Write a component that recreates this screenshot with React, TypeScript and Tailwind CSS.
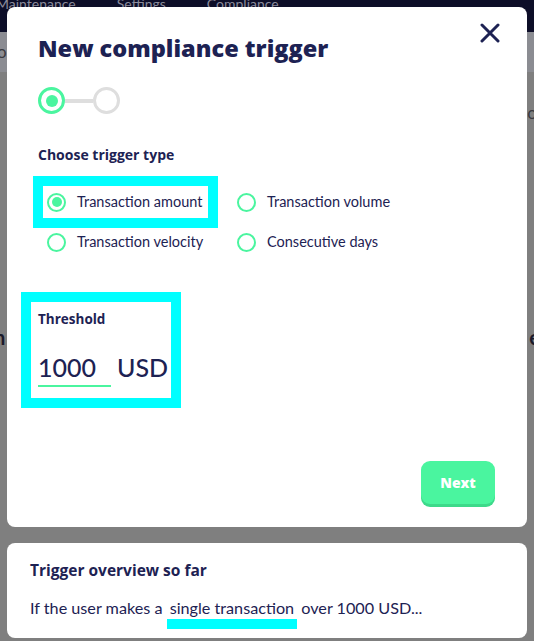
import React, { useState } from 'react';

const navy = 'text-[#1d2253]';
const heading = "font-['Open_Sans',sans-serif]";

type Option = { id: string; label: string };

const options: Option[] = [
  { id: 'amount', label: 'Transaction amount' },
  { id: 'volume', label: 'Transaction volume' },
  { id: 'velocity', label: 'Transaction velocity' },
  { id: 'days', label: 'Consecutive days' },
];

function Radio({ checked }: { checked: boolean }) {
  return (
    <span className="flex h-[19px] w-[19px] shrink-0 items-center justify-center rounded-full border-2 border-[#4af59f]">
      {checked && <span className="h-[10px] w-[10px] rounded-full bg-[#4af59f]" />}
    </span>
  );
}

function Stepper() {
  return (
    <div className="flex items-center">
      <span className="flex h-[27px] w-[27px] items-center justify-center rounded-full border-[3px] border-[#4af59f]">
        <span className="h-[12px] w-[12px] rounded-full bg-[#4af59f]" />
      </span>
      <span className="h-[4px] w-[28px] bg-[#dedede]" />
      <span className="h-[27px] w-[27px] rounded-full border-[3px] border-[#dedede]" />
    </div>
  );
}

export default function App() {
  const [selected, setSelected] = useState('amount');
  const [amount, setAmount] = useState('1000');

  return (
    <div className="relative h-[641px] w-[534px] overflow-hidden bg-[#7f7f7f] font-['Lato',sans-serif]">
      {/* page behind the overlay */}
      <div className="flex h-[32px] items-start gap-[41px] bg-[#0d0e28] text-[14px] leading-[10px] text-[#8b8b9b]">
        <span className="-ml-[4px] -mt-[1px]">Maintenance</span>
        <span className="-mt-[1px]">Settings</span>
        <span className="-mt-[1px]">Compliance</span>
      </div>
      <div className="flex h-[40px] items-center bg-[#8b8c92] text-[17px] text-[#3a3a40]">
        <span className="-ml-[3px]">o</span>
      </div>
      <div className="mt-[28px] flex justify-end text-[17px] text-[#3a3a40]">
        <span className="-mr-[3px]">o</span>
      </div>
      <div className="mt-[196px] flex justify-between text-[20px] font-bold text-[#1a1a2a]">
        <span className="-ml-[6px]">n</span>
        <span className="-mr-[6px]">e</span>
      </div>

      {/* modal layer */}
      <div className="absolute inset-0 flex flex-col gap-[16px] px-[7px] pt-[7px]">
        <div className="relative flex h-[520px] flex-col rounded-lg bg-white pl-[31px] pr-[32px] pt-[26px]">
          <button className={`absolute right-[27px] top-[16px] ${navy}`} aria-label="Close">
            <svg width="20" height="20" viewBox="0 0 20 20" fill="none" stroke="currentColor" strokeWidth="3" strokeLinecap="round">
              <path d="M2 2L18 18M18 2L2 18" />
            </svg>
          </button>

          <h1 className={`${heading} text-[23.5px] font-extrabold leading-[30px] ${navy}`}>New compliance trigger</h1>

          <div className="mt-[24px]">
            <Stepper />
          </div>

          <h2 className={`${heading} mt-[31px] text-[14px] font-bold leading-[20px] ${navy}`}>Choose trigger type</h2>

          <div className="ml-[5px] mt-[21px] grid grid-cols-[190px_auto] gap-y-[8px]">
            {options.map((o) => (
              <button
                key={o.id}
                onClick={() => setSelected(o.id)}
                className={`flex h-[32px] w-fit items-center gap-[11px] pl-[4px] pr-[6px] text-[14.5px] ${navy} ${
                  o.id === 'amount' ? 'outline-[10px] outline-solid outline-[#00ffff]' : ''
                }`}
              >
                <Radio checked={selected === o.id} />
                {o.label}
              </button>
            ))}
          </div>

          <div className="-ml-[7px] mt-[44px] h-[96px] w-[140px] pl-[7px] pt-[8px] outline-[10px] outline-solid outline-[#00ffff]">
            <div className={`${heading} text-[13.5px] font-bold leading-[18px] ${navy}`}>Threshold</div>
            <div className="mt-[25px] flex items-start">
              <input
                value={amount}
                onChange={(e) => setAmount(e.target.value)}
                className={`w-[73px] border-b-2 border-[#4af59f] pb-[4px] text-[25px] font-medium leading-[28px] outline-none ${navy}`}
              />
              <span className={`ml-[6px] text-[25px] font-medium leading-[28px] ${navy}`}>USD</span>
            </div>
          </div>

          <div className="mt-[63px] flex justify-end">
            <button
              className={`${heading} h-[43px] w-[74px] rounded-[9px] bg-[#4af59f] text-[14px] font-extrabold text-white shadow-[0_3px_0_#3dd98a]`}
            >
              Next
            </button>
          </div>
        </div>

        <div className="rounded-lg bg-white pb-[20px] pl-[23px] pt-[17px]">
          <h3 className={`${heading} text-[15.5px] font-bold leading-[20px] ${navy}`}>Trigger overview so far</h3>
          <p className={`mt-[18px] text-[16.2px] leading-[20px] ${navy}`}>
            If the user makes a{' '}
            <span className="border-b-[10px] border-[#00ffff] px-[3px] pb-[2px]">single transaction</span> over {amount} USD...
          </p>
        </div>
      </div>
    </div>
  );
}
